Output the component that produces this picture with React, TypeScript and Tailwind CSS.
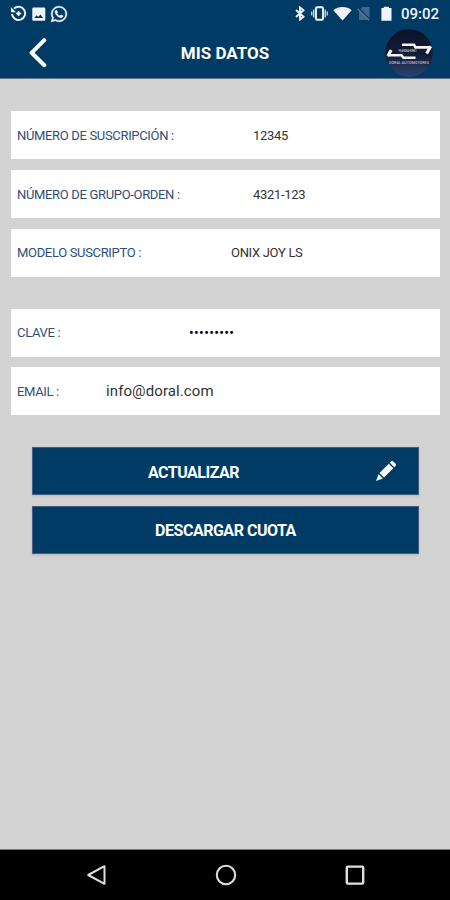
import { FaWhatsapp } from 'react-icons/fa';

interface FieldProps {
  label: string;
  labelWidth: string;
  value: string;
  valueClass?: string;
}

const fields: FieldProps[] = [
  { label: 'NÚMERO DE SUSCRIPCIÓN :', labelWidth: 'w-[236px]', value: '12345' },
  { label: 'NÚMERO DE GRUPO-ORDEN :', labelWidth: 'w-[236px]', value: '4321-123' },
  { label: 'MODELO SUSCRIPTO :', labelWidth: 'w-[214px]', value: 'ONIX JOY LS' },
];

function Field({ label, labelWidth, value, valueClass = 'text-[13px] tracking-[-0.3px] text-[#333]' }: FieldProps) {
  return (
    <div className="flex h-12 items-center bg-white pl-1.5 pt-px">
      <span className={`shrink-0 whitespace-nowrap text-[13px] tracking-[-0.33px] text-[#2f4f75] ${labelWidth}`}>{label}</span>
      <span className={`whitespace-nowrap ${valueClass}`}>{value}</span>
    </div>
  );
}

function StatusBar() {
  return (
    <div className="flex h-[27px] items-center text-[#f0f4fa]">
      {/* Notifications */}
      <svg className="ml-[10px]" width="17" height="17" viewBox="0 0 17 17" fill="none" stroke="currentColor">
        <path d="M4 3.6A6.6 6.6 0 1 1 2 9" strokeWidth="2" />
        <path d="M1 2.2V7.2h5z" fill="currentColor" stroke="none" />
        <path d="M8.6 6l.9 1.7 1.7.8-1.7.9-.9 1.7-.9-1.7L6 8.5l1.7-.8z" fill="currentColor" strokeWidth="1" />
      </svg>
      <svg className="ml-[5px]" width="14" height="14" viewBox="0 0 14 14">
        <rect x="0.3" y="0.5" width="13" height="13.2" rx="1.2" fill="currentColor" />
        <path d="M2.5 11l2-2.8 1.8 1.6 2.2-2.4 2.6 3.6z" fill="#003b66" />
      </svg>
      <FaWhatsapp className="ml-1 h-[18px] w-[18px]" stroke="currentColor" strokeWidth="14" />

      {/* System icons */}
      <svg className="ml-auto" width="12" height="15" viewBox="0 0 12 15" fill="none" stroke="currentColor" strokeWidth="1.9">
        <path d="M2 4l7.5 6.8L6 13.6V1.4l3.5 2.8L2 11" />
      </svg>
      <svg className="ml-[5px]" width="17" height="15" viewBox="0 0 17 15" fill="none" stroke="currentColor">
        <rect x="5" y="1.2" width="7" height="12.6" rx="1" strokeWidth="1.9" />
        <path d="M2.8 3.5v8M14.2 3.5v8" strokeWidth="1.2" />
        <path d="M.8 5.5v4M16.2 5.5v4" strokeWidth="1.1" />
      </svg>
      <svg className="ml-[5px]" width="19" height="15" viewBox="0 0 19 15" fill="currentColor">
        <path d="M.3 4.2C5.2-.1 13.8-.1 18.7 4.2L9.5 14.4z" />
      </svg>
      <svg className="ml-[5px]" width="14" height="15" viewBox="0 0 14 15">
        <path d="M5.5 1H12.5V14H2V4.7z" fill="#40688d" />
        <path d="M.8 1.8l12 12.2" stroke="#003b66" strokeWidth="2" />
        <path d="M.6 2.8l11.6 11.6" stroke="#6688a5" strokeWidth="1.1" />
      </svg>
      <svg className="ml-[10px]" width="11" height="15" viewBox="0 0 11 15" fill="currentColor">
        <path d="M.4 2H2.8V.8h5.2V2h2.5V14.8H.4z" />
      </svg>
      <span className="ml-[9px] mr-[11px] pt-px text-[15px] font-medium leading-[26px]">09:02</span>
    </div>
  );
}

function DealerLogo() {
  return (
    <svg width="48" height="48" viewBox="0 0 48 48" className="rounded-full">
      <defs>
        <linearGradient id="logo-bg" x1="0" y1="0" x2="0" y2="1">
          <stop offset="0" stopColor="#0b1328" />
          <stop offset="0.55" stopColor="#141d37" />
          <stop offset="1" stopColor="#2a4570" />
        </linearGradient>
      </defs>
      <circle cx="24" cy="24" r="24" fill="url(#logo-bg)" />
      <g fill="none" stroke="#f3f4f7">
        <path d="M17 15.7H29L30.5 18.4H44" strokeWidth="2.6" />
        <path d="M45.8 17.2L41.6 24.6" strokeWidth="3" />
        <path d="M6.2 21L2.8 27" strokeWidth="3" />
        <path d="M2.5 26.3H16.5L18.5 28.8H30.5" strokeWidth="2.4" />
      </g>
      <text x="22.5" y="23.4" textAnchor="middle" fontSize="3.4" fill="#b7bfce" textLength="18">PLAN DE AHORRO</text>
      <text x="24" y="35.4" textAnchor="middle" fontSize="3.8" fontWeight="500" fill="#b4bccd" textLength="40">DORAL AUTOMOTORES</text>
    </svg>
  );
}

export default function App() {
  return (
    <div className="flex h-[900px] w-[450px] flex-col overflow-hidden bg-[#d3d3d3] font-[Roboto,sans-serif]">
      <header className="h-[79px] shrink-0 border-b border-[#60758c] bg-[#003b66]">
        <StatusBar />
        <div className="grid h-[51px] grid-cols-[1fr_auto_1fr] items-center pt-px text-white">
          <svg className="ml-[28px]" width="20" height="30" viewBox="0 0 20 30" fill="none" stroke="currentColor" strokeWidth="4" strokeLinecap="round" strokeLinejoin="round">
            <path d="M16.3 2.2L3.6 14.8l12.7 12.4" />
          </svg>
          <h1 className="pt-px text-[17px] font-bold">MIS DATOS</h1>
          <div className="mr-[17px] justify-self-end">
            <DealerLogo />
          </div>
        </div>
      </header>

      <main className="flex-1 pt-8">
        <section className="ml-[11px] mr-[10px] flex flex-col gap-[10.75px]">
          {fields.map((field) => (
            <Field key={field.label} {...field} />
          ))}
        </section>

        <section className="ml-[11px] mr-[10px] mt-8 flex flex-col gap-[10.5px]">
          <Field label="CLAVE :" labelWidth="w-[172px]" value="•••••••••" valueClass="text-[14px] tracking-[0.32px] text-black" />
          <Field label="EMAIL :" labelWidth="w-[89px]" value="info@doral.com" valueClass="text-[15px] tracking-[0.1px] text-[#333]" />
        </section>

        <section className="ml-[32px] mr-[31px] mt-8 flex flex-col gap-[10.5px] text-[16px] font-bold tracking-[-0.48px] text-white">
          <button className="grid h-12 grid-cols-[1fr_auto_1fr] items-center border border-[#455f83] bg-[#003b66] shadow-sm">
            <span className="col-start-2 pr-[64px] pt-[3px]">ACTUALIZAR</span>
            <svg className="mr-[21px] justify-self-end" width="22" height="22" viewBox="0 0 22 22" fill="currentColor">
              <path d="M13.8 3.7l4.5 4.5L9 17.5 4.5 13z" />
              <path d="M14.8 2.7l1.3-1.3c.6-.6 1.5-.6 2.1 0l2.4 2.4c.6.6.6 1.5 0 2.1l-1.3 1.3z" />
              <path d="M3.6 14.2L7.8 18.4 1 21z" />
            </svg>
          </button>
          <button className="h-12 border border-[#455f83] bg-[#003b66] pt-[3px] shadow-sm">DESCARGAR CUOTA</button>
        </section>
      </main>

      {/* Android navigation */}
      <nav className="flex h-[51px] shrink-0 items-center justify-between border-t border-[#777] bg-black pl-[86px] pr-[84px]">
        <svg width="21" height="22" viewBox="0 0 21 22" fill="none" stroke="#dedede" strokeWidth="2" strokeLinejoin="round">
          <path d="M18.5 2.2v17.6L2.2 11z" />
        </svg>
        <svg width="22" height="22" viewBox="0 0 22 22" fill="none" stroke="#dedede" strokeWidth="2.1">
          <circle cx="11" cy="11" r="9.2" />
        </svg>
        <svg width="22" height="22" viewBox="0 0 22 22" fill="none" stroke="#dedede" strokeWidth="2.4">
          <rect x="2.8" y="2.6" width="16.4" height="17" rx="1" />
        </svg>
      </nav>
    </div>
  );
}
